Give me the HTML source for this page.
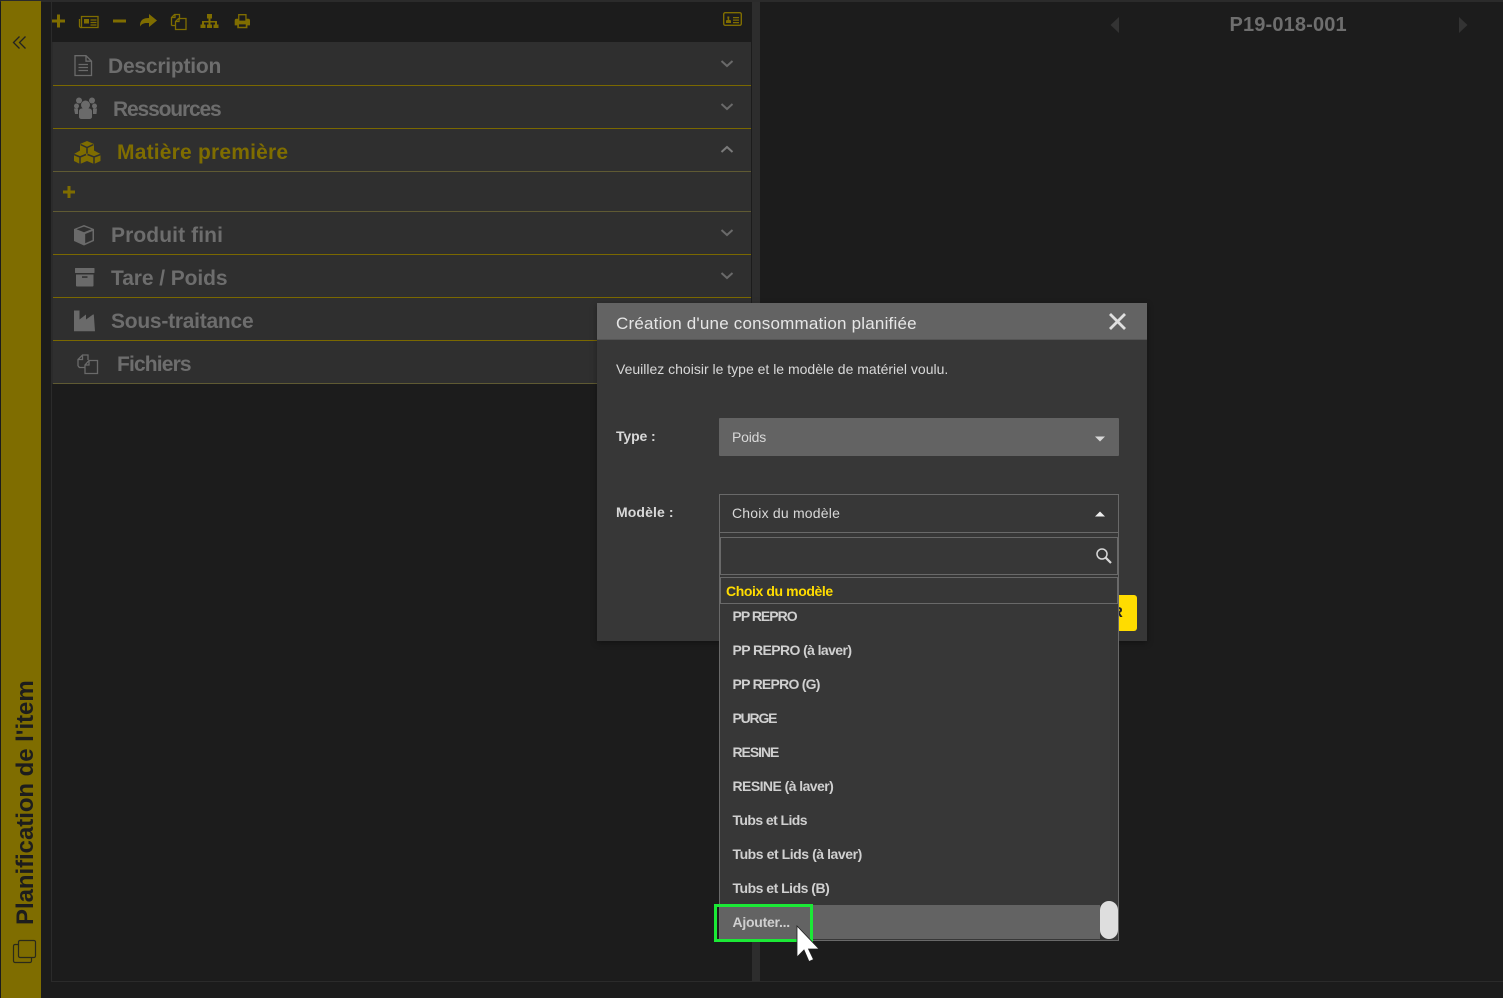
<!DOCTYPE html>
<html lang="fr"><head><meta charset="utf-8"><title>Planification</title>
<style>
html,body{margin:0;padding:0;background:#1c1c1c;width:1503px;height:998px;overflow:hidden;font-family:"Liberation Sans",sans-serif}
.a{position:absolute}
.h{position:absolute;left:53px;width:698px;background:#2f2f2f;border-bottom:1px solid #7a6800}
.t{position:absolute;font-weight:bold;font-size:21px;line-height:26px;color:#6d6d6d;white-space:nowrap}
.li{position:absolute;left:732.500px;font-size:14px;font-weight:bold;line-height:18px;color:#d0d0d0;white-space:nowrap}
svg{position:absolute;overflow:visible}
</style></head><body>
<div class="a" style="left:0;top:0;width:1503px;height:2px;background:#2b2b2b"></div>
<div class="a" style="left:1px;top:1px;width:40px;height:997px;background:#7f6d00"></div>
<div class="a" style="left:51px;top:2px;width:1px;height:979px;background:#2b2b2b"></div>
<div class="a" style="left:51px;top:981px;width:1452px;height:1px;background:#2b2b2b"></div>
<div class="a" style="left:752px;top:2px;width:7.500px;height:979px;background:#2d2d2d"></div>

<!-- side bar -->
<svg style="left:12px;top:35px" width="16" height="16" fill="none" stroke="#222" stroke-width="1.300"><path d="M7.500 1.500 1.500 7.500l6 6M13.500 1.500l-6 6 6 6"/></svg>
<div class="a" style="left:26px;top:925px;transform-origin:0 0;transform:translate(-12px,0) rotate(-90deg);font-weight:bold;font-size:24px;line-height:24px;color:#1d1d1d;white-space:nowrap;letter-spacing:-.05px">Planification de l'item</div>
<svg style="left:12px;top:939px" width="26" height="26" fill="none" stroke="#2a2a1a" stroke-width="1.200"><rect x="6.500" y="1.500" width="17" height="17" rx="1.500"/><path d="M6 5.500H3a1.500 1.500 0 0 0-1.500 1.500v15A1.500 1.500 0 0 0 3 23.500h15a1.500 1.500 0 0 0 1.500-1.500v-3"/></svg>

<!-- toolbar icons -->
<svg style="left:52px;top:13px" width="200" height="18" fill="#7f6d00">
<path d="M5 2h3v5h5v3H8v5H5v-5H0V7h5z" transform="translate(0 -.5)"/>
<g fill="none" stroke="#7f6d00" stroke-width="1.300"><path d="M29.500 3.500h16.500v11H29.500zM27.500 6v7a1.500 1.500 0 0 0 2 1.500"/><path d="M38.500 7h6M38.500 9.500h6M38.500 12h6"/></g><rect x="32" y="6" width="5" height="4.500"/>
<rect x="61" y="6.500" width="13" height="3"/>
<path d="M87 14c0-6 3-8 9-8V2l8 6.500-8 6.500v-4c-4 0-7 0-9 3.500z" transform="translate(1 -1)"/>
<g fill="none" stroke="#7f6d00" stroke-width="1.300"><path d="M119.500 12.500v-8l3-3h5v5M123 1.500v3h-3M119.500 12.500h3.500"/><path d="M123.500 16.500v-8l3-3h7.500v11zM127 5.500v3h-3"/></g>
<path d="M155 1h5v4.500h-1.500V8H165v3.500h1.500V15h-5v-3.500H163V9.500h-4.500v2H160V15h-5v-3.500h1.500v-2H152v2h1.500V15h-5v-3.500H150V8h6.500V5.500H155z"/>
<g transform="translate(29.700 0) scale(.85 .95)"><path d="M184 1h10l0 5h2a2 2 0 0 1 2 2v5h-3v3h-12v-3h-3V8a2 2 0 0 1 2-2h2zm1.500 1.500V8h7V2.500zM185 12v2.500h8V12z" fill-rule="evenodd"/></g>
</svg>
<svg style="left:723px;top:12px" width="20" height="15"><rect x=".7" y=".7" width="17.600" height="12.600" rx="1.500" fill="none" stroke="#7f6d00" stroke-width="1.400"/><path d="M3 11V8.500L5 7.500 4.300 6V4.500h2V6L5.800 7.500 8 8.500V11zM10 5h6v1.200h-6zM10 7.500h6v1.200h-6zM10 10h6v1.200h-6z" fill="#7f6d00"/></svg>

<!-- accordions -->
<div class="a" style="left:52px;top:42px;width:1px;height:342px;background:#2b2b2b"></div>
<div class="h" style="top:42px;height:43px"></div>
<div class="h" style="top:86px;height:42px"></div>
<div class="h" style="top:129px;height:42px;border-bottom-color:#5f5a33"></div>
<div class="h" style="top:172px;height:39px;border-bottom-color:#5f5a33"></div>
<div class="h" style="top:212px;height:42px"></div>
<div class="h" style="top:255px;height:42px"></div>
<div class="h" style="top:298px;height:42px"></div>
<div class="h" style="top:341px;height:42px;border-bottom-color:#5f5a33"></div>

<div class="t" style="left:108px;top:54px;letter-spacing:-.22px">Description</div>
<div class="t" style="left:113px;top:97px;letter-spacing:-1.150px">Ressources</div>
<div class="t" style="left:117px;top:140px;color:#7f6d00;letter-spacing:.2px">Matière première</div>
<div class="t" style="left:111px;top:223px;letter-spacing:.1px">Produit fini</div>
<div class="t" style="left:111px;top:266px;letter-spacing:-.08px">Tare / Poids</div>
<div class="t" style="left:111px;top:309px;letter-spacing:-.25px">Sous-traitance</div>
<div class="t" style="left:117px;top:352px;letter-spacing:-.85px">Fichiers</div>

<!-- accordion icons -->
<svg style="left:74px;top:55px" width="19" height="22" fill="none" stroke="#6a6a6a" stroke-width="1.300"><path d="M1 .7h11l5.500 5.500V20.500H1zM12 .7v5.500h5.500M4.500 9.500h9.500M4.500 12.500h9.500M4.500 15.500h9.500"/></svg>
<svg style="left:74px;top:97px" width="24" height="23" fill="#6a6a6a"><circle cx="5" cy="3.500" r="3"/><circle cx="18" cy="3.500" r="3"/><circle cx="11.500" cy="8" r="4.500"/><circle cx="2.500" cy="9" r="2.500"/><circle cx="20.500" cy="9" r="2.500"/><path d="M5 14c0-1.500 1.500-2.500 3-2.500h7c1.500 0 3 1 3 2.500v6c0 1-1 2-2.500 2h-8C6 22 5 21 5 20zM0 11.500h4V17H1zM19 11.500h4L22.500 17H19z"/></svg>
<svg style="left:74px;top:141px" width="27" height="23" fill="#7f6d00"><path d="M13 0 20 3v7l-7 3-7-3V3z"/><path d="M6 9.500 13 13v7l-7 3-6-3v-7zM20 9.500 26.500 13v7L20 23l-7-3v-7z"/><path d="M6.500 3.500 13 6.500l6.500-3M13 6.500v6M0 13.500 6 16l6-2.500M6 16v7M13.500 13.500 20 16l6.500-2.500M20 16v7" fill="none" stroke="#2f2f2f" stroke-width="1.500"/></svg>
<svg style="left:74px;top:225px" width="21" height="21"><path d="M10 0 20 4v12L10 20.500 0 16V4z" fill="#6a6a6a"/><path d="M2.500 4.300 10 7.300l7.500-3L10 1.600zM11.200 9v9.300l7.300-3.300V6z" fill="#2f2f2f"/></svg>
<svg style="left:75px;top:268px" width="20" height="19" fill="#6a6a6a"><rect x="0" y="0" width="19.500" height="5" rx=".5"/><path d="M1 6.500h17.500v11a1 1 0 0 1-1 1H2a1 1 0 0 1-1-1z"/><rect x="7" y="8.300" width="5.500" height="1.500" fill="#2f2f2f"/></svg>
<svg style="left:74px;top:310px" width="22" height="21" fill="#6a6a6a"><path d="M0 0h5.500v9l6.500-5v5l7-5 .8 0 1.200 16.800H0z" transform="translate(0 .5)"/></svg>
<svg style="left:77px;top:354px" width="22" height="21" fill="none" stroke="#6a6a6a" stroke-width="1.300"><path d="M1 12V5.500L5.500 1H11v5M5.500 1v4.500H1M1 12l1.500 1.500H8"/><path d="M8 19.500V11l4-4.500h8.500v13zM12 6.500V11H8"/></svg>
<!-- chevrons -->
<svg style="left:720px;top:59px" width="14" height="10" fill="none" stroke="#6a6a6a" stroke-width="2"><path d="M1.500 2 7 7l5.500-5"/></svg>
<svg style="left:720px;top:102px" width="14" height="10" fill="none" stroke="#6a6a6a" stroke-width="2"><path d="M1.500 2 7 7l5.500-5"/></svg>
<svg style="left:720px;top:144px" width="14" height="10" fill="none" stroke="#7a7a7a" stroke-width="2"><path d="M1.500 8 7 3l5.500 5"/></svg>
<svg style="left:720px;top:228px" width="14" height="10" fill="none" stroke="#6a6a6a" stroke-width="2"><path d="M1.500 2 7 7l5.500-5"/></svg>
<svg style="left:720px;top:271px" width="14" height="10" fill="none" stroke="#6a6a6a" stroke-width="2"><path d="M1.500 2 7 7l5.500-5"/></svg>
<svg style="left:63px;top:186px" width="12" height="12" fill="#7f6d00"><path d="M4.500 0h3v4.500H12v3H7.500V12h-3V7.500H0v-3h4.500z"/></svg>

<!-- header right -->
<svg style="left:1109px;top:16px" width="12" height="18" fill="#333"><path d="M10 1v16L1.500 9z"/></svg>
<svg style="left:1457px;top:16px" width="12" height="18" fill="#333"><path d="M2 1v16l8.500-8z"/></svg>
<div class="a" style="left:1229.500px;top:13px;font-weight:bold;font-size:20px;line-height:24px;color:#6e6e6e;white-space:nowrap;letter-spacing:.15px">P19-018-001</div>

<!-- modal -->
<div class="a" style="left:597px;top:303px;width:550px;height:338px;background:#373737;box-shadow:0 2px 6px rgba(0,0,0,.35)"></div>
<div class="a" style="left:597px;top:303px;width:550px;height:36px;background:#636363;border-bottom:1px solid #555"></div>
<div class="a" style="left:616px;top:313px;font-size:17px;line-height:22px;color:#e6e6e6;white-space:nowrap;letter-spacing:.2px">Création d'une consommation planifiée</div>
<svg style="left:1108px;top:312px" width="20" height="20" stroke="#e0e0e0" stroke-width="2.800" fill="none"><path d="M2 2l15 15M17 2 2 17"/></svg>
<div class="a" style="left:616px;top:360px;font-size:14px;line-height:18px;color:#d8d8d8;white-space:nowrap;letter-spacing:0">Veuillez choisir le type et le modèle de matériel voulu.</div>
<div class="a" style="left:616px;top:427px;font-size:14px;font-weight:bold;line-height:18px;color:#d8d8d8;letter-spacing:-.1px">Type :</div>
<div class="a" style="left:616px;top:503px;font-size:14px;font-weight:bold;line-height:18px;color:#d8d8d8;letter-spacing:.1px">Modèle :</div>
<div class="a" style="left:719px;top:418px;width:400px;height:38px;background:#636363;border-radius:1px"></div>
<div class="a" style="left:732px;top:428px;font-size:14px;line-height:18px;color:#d8d8d8;letter-spacing:-.2px">Poids</div>
<svg style="left:1094px;top:436px" width="12" height="6" fill="#d8d8d8"><path d="M1 .5h10L6 5.500z"/></svg>
<div class="a" style="left:1110px;top:595px;width:27px;height:36px;background:#ffdc00;border-radius:3px"></div>
<div class="a" style="left:1112px;top:604px;font-size:15px;font-weight:bold;line-height:18px;color:#222">R</div>

<!-- dropdown -->
<div class="a" style="left:719px;top:532px;width:398px;height:408px;background:#373737;border:1px solid #696969;border-top:none"></div>
<div class="a" style="left:719px;top:494px;width:398px;height:37px;border:1px solid #696969;background:#373737"></div>
<div class="a" style="left:732px;top:504px;font-size:14px;line-height:18px;color:#d8d8d8;letter-spacing:.2px">Choix du modèle</div>
<svg style="left:1094px;top:511px" width="12" height="6" fill="#eee"><path d="M1 5.500h10L6 .5z"/></svg>
<div class="a" style="left:720px;top:537px;width:396px;height:36px;border:1px solid #696969"></div>
<svg style="left:1095px;top:547px" width="18" height="18" fill="none" stroke="#d8d8d8"><circle cx="7" cy="7" r="5" stroke-width="1.500"/><path d="M10.700 10.700 16 16" stroke-width="2.200"/></svg>
<div class="a" style="left:720px;top:577px;width:396px;height:25px;border:1px solid #696969"></div>
<div class="a" style="left:726px;top:582px;font-size:14px;font-weight:bold;line-height:18px;color:#ffdc00;white-space:nowrap;letter-spacing:-.4px">Choix du modèle</div>

<div class="li" style="top:607px;letter-spacing:-1px">PP REPRO</div>
<div class="li" style="top:641px;letter-spacing:-.6px">PP REPRO (à laver)</div>
<div class="li" style="top:675px;letter-spacing:-.75px">PP REPRO (G)</div>
<div class="li" style="top:709px;letter-spacing:-1.200px">PURGE</div>
<div class="li" style="top:743px;letter-spacing:-1.050px">RESINE</div>
<div class="li" style="top:777px;letter-spacing:-.56px">RESINE (à laver)</div>
<div class="li" style="top:811px;letter-spacing:-.58px">Tubs et Lids</div>
<div class="li" style="top:845px;letter-spacing:-.44px">Tubs et Lids (à laver)</div>
<div class="li" style="top:879px;letter-spacing:-.5px">Tubs et Lids (B)</div>
<div class="a" style="left:720px;top:905px;width:380px;height:34px;background:#636363"></div>
<div class="li" style="top:913px;letter-spacing:-.25px">Ajouter...</div>
<div class="a" style="left:1100px;top:901px;width:18px;height:38px;background:#dedede;border-radius:9px"></div>

<!-- highlight + cursor -->
<div class="a" style="left:714px;top:904px;width:93px;height:32px;border:3px solid #1be936"></div>
<svg style="left:796px;top:925px" width="26" height="38"><path d="M1 1V32l7-7 5 11.500 4.500-2L12.500 24H23z" fill="#fff" stroke="#222" stroke-width=".8"/></svg>
</body></html>
